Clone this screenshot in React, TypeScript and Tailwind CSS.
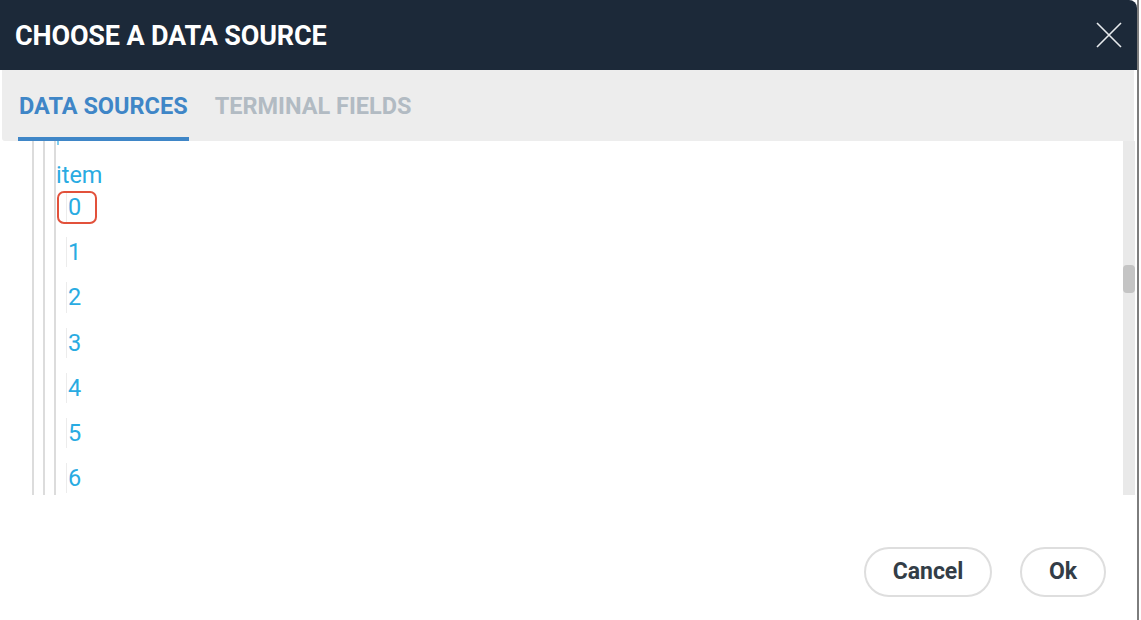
const items = ['0', '1', '2', '3', '4', '5', '6']

export default function App() {
  return (
    <div className="flex h-[620px] w-[1141px] bg-white font-['Roboto',sans-serif]">
      <div className="flex w-[1139px] flex-col border-r-2 border-[#7d7d7d]">
        {/* header */}
        <div className="flex h-[70px] shrink-0 items-center justify-between rounded-tr-[8px] bg-[#1c2939] pl-[15px] pr-[14px]">
          <h1 className="mt-[2px] text-[27px] font-bold tracking-[-0.15px] text-white">CHOOSE A DATA SOURCE</h1>
          <svg width="28" height="28" viewBox="0 0 28 28" className="text-[#e8ebee]">
            <path d="M2 2 L26 26 M26 2 L2 26" stroke="currentColor" strokeWidth="1.6" fill="none" />
          </svg>
        </div>

        {/* tabs */}
        <div className="ml-[2px] mr-[3px] flex h-[71px] shrink-0 items-end gap-[26px] rounded-bl-[3px] bg-[#ededed] pl-[16px]">
          <div className="flex h-full flex-col justify-end">
            <span className="px-[1px] pb-[13px] text-[23.5px] font-bold text-[#3f86c7]">DATA SOURCES</span>
            <div className="h-[4px] bg-[#3f86c7]" />
          </div>
          <div className="flex h-full flex-col justify-end">
            <span className="pb-[17px] text-[23.5px] font-bold text-[#b2bbc3]">TERMINAL FIELDS</span>
          </div>
        </div>

        {/* tree */}
        <div className="flex h-[354px] shrink-0 overflow-hidden">
          <div className="flex flex-1 pl-[32px]">
            <div className="w-[2px] bg-[#dcdcdc]" />
            <div className="ml-[9px] w-[2px] bg-[#dcdcdc]" />
            <div className="ml-[9px] w-[2px] bg-[#dcdcdc]" />
            <div className="flex flex-1 flex-col">
              <div className="ml-[1px] h-[4px] w-[2px] bg-[#29abe2] opacity-60" />
              <div className="mt-[16px] text-[23.5px] leading-[28px] text-[#29abe2]">item</div>
              <div className="mt-[3px] flex flex-col gap-[15px] pl-[10px]">
                {items.map((n, i) => (
                  <div key={n} className="relative h-[30.2px] border-l border-[#ececec] pl-[1px] text-[23.5px] leading-[30px] text-[#29abe2]">
                    {n}
                    {i === 0 && (
                      <div className="absolute left-[-10px] top-[-1px] h-[33px] w-[40px] rounded-[7px] border-[2.5px] border-[#e2513b]" />
                    )}
                  </div>
                ))}
              </div>
            </div>
            <div className="mr-[2px] flex w-[12px] flex-col bg-[#e9e9e9]">
              <div className="mt-[124px] h-[28px] rounded-[4px] bg-[#c4c4c4]" />
            </div>
          </div>
        </div>

        {/* footer */}
        <div className="flex flex-1 items-start justify-end gap-[28px] pr-[31px] pt-[52px]">
          <button className="h-[50px] w-[128px] rounded-full border-2 border-[#dedede] text-[23px] font-bold text-[#333d47]">
            Cancel
          </button>
          <button className="h-[50px] w-[86px] rounded-full border-2 border-[#dedede] text-[23px] font-bold text-[#333d47]">
            Ok
          </button>
        </div>
      </div>
    </div>
  )
}
